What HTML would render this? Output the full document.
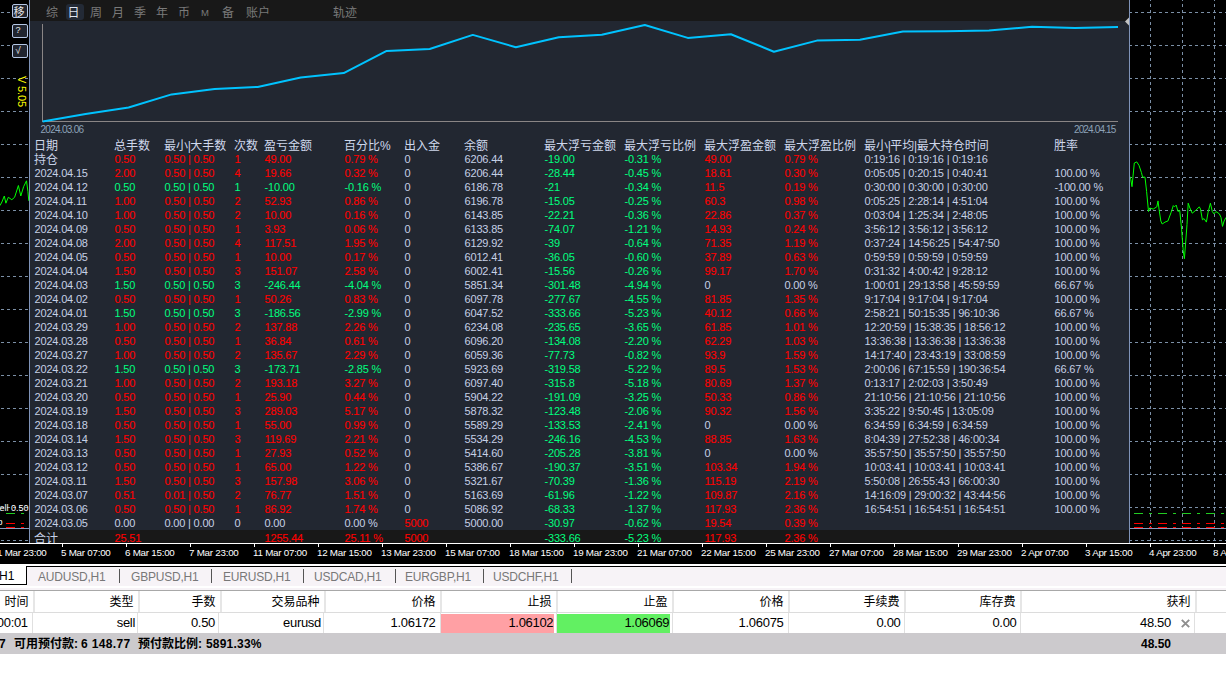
<!DOCTYPE html>
<html lang="zh"><head><meta charset="utf-8"><title>MT4</title>
<style>
html,body{margin:0;padding:0}
body{width:1226px;height:677px;overflow:hidden;background:#fff;position:relative;font-family:"Liberation Sans","Noto Sans CJK SC",sans-serif}
#chart{position:absolute;left:0;top:0;width:1226px;height:564px;background:#000;overflow:hidden}
svg{position:absolute;left:0;top:0;overflow:visible}
#grid line{stroke:#7b8fa6;stroke-width:1;stroke-dasharray:3 3;shape-rendering:crispEdges}
#panel{position:absolute;left:29px;top:0;width:1099px;height:543px;background:#222731;border-left:1px solid #7f93b8;border-right:1px solid #7f93b8;overflow:hidden}
#tb{position:absolute;left:0;top:0;width:1099px;height:21px;background:#181818}
#tb span{position:absolute;top:6px;height:16px;line-height:15px;font-size:12px;color:#7a7a7a;white-space:nowrap}
#tb span.on{color:#dfe6f2;width:18px;text-align:center}
#tb i{position:absolute;left:36px;top:4px;width:18px;height:16px;background:#232a36;border-radius:3px}
.rw{position:absolute;left:0;width:1099px;height:14px;line-height:14px;font-size:11px;white-space:nowrap}
.rw.tot{background:#181818;top:530px !important}
.rw.tot .c{top:1px}
.rw.tot .c.z{top:2px}
.c{position:absolute;top:-1px;letter-spacing:-0.18px}
.h,.z{font-size:12px;top:0;letter-spacing:0}
.h{color:#cfd8ec}
.h b{font-weight:normal;margin:0 -0.4px}
.w{color:#c6d0e6}
.c.r{color:#ff0000;-webkit-text-stroke:0.1px #ff0000}
.c.g{color:#00ff7f}
.dl{position:absolute;font-size:10px;color:#8da2b8;line-height:10px;top:124.5px;letter-spacing:-0.72px;white-space:nowrap}
.btn{position:absolute;left:12px;width:14px;height:12px;border:1px solid #b4c6e4;border-radius:2px;background:#20242e;color:#e6e6e6;font-size:11px;line-height:12px;text-align:center;overflow:hidden}
#ver{position:absolute;left:16px;top:76px;letter-spacing:-0.15px;width:12px;height:34px;color:#ffff00;font-size:11px;line-height:12px;white-space:nowrap;writing-mode:vertical-rl}
#axis{position:absolute;left:0;top:543px;width:1226px;height:21px;background:#000;border-top:1px solid #fff;overflow:hidden}
.tk{position:absolute;top:0;width:1px;height:3px;background:#fff}
.tl{position:absolute;top:2.6px;margin-left:1px;font-size:9.8px;line-height:12px;color:#fff;white-space:nowrap;letter-spacing:-0.25px}
#tabs{position:absolute;left:0;top:564px;width:1226px;height:26px;background:#fff}
#tabs .bar{position:absolute;left:27px;top:2px;width:1199px;height:19px;border-top:1px solid #000;background:#f7f3f7}
#tabs .bar2{position:absolute;left:0;top:24px;width:1226px;height:2px;background:#f7f3f7}
#tabs .act{position:absolute;left:0;top:0;width:27px;height:20px;background:#fff;border-bottom:1px solid #000;font-size:12px;line-height:24px;color:#000}
#tabs .act:after{content:'';position:absolute;right:0;top:2px;width:1px;height:19px;background:#000}
#tabs .t{position:absolute;top:5px;font-size:12px;line-height:16px;color:#787878;white-space:nowrap;letter-spacing:-0.2px}
#tabs .s{position:absolute;top:5px;width:1px;height:14px;background:#555}
#tbl{position:absolute;left:0;top:590px;width:1226px;height:43px;background:#fff;border-top:1px solid #a8a8a8}
#tbl .hr{position:absolute;left:0;top:0;width:1226px;height:21px;border-bottom:1px solid #dcdcdc}
#tbl .cell{position:absolute;box-sizing:border-box;height:21px;line-height:21px;font-size:12px;color:#000;text-align:right;padding-right:4.5px;padding-top:1px;border-right:2px solid #e6e6e6;white-space:nowrap}
#tbl .row .cell{top:22px;height:21px;line-height:20px;font-size:13px;border-right:1px solid #e0e0e0;padding-right:2px;padding-top:0;letter-spacing:-0.3px}
#stat{position:absolute;left:0;top:633px;width:1226px;height:21px;background:#cccacd;font-weight:bold;font-size:12px;line-height:22px;color:#000;white-space:nowrap}
#stat span{position:absolute;top:0}
</style></head><body>
<div id="chart">
<svg id="grid" width="1226" height="564">
<line x1="-5" y1="12.5" x2="11" y2="12.5"/>
<line x1="1129" y1="12.5" x2="1226" y2="12.5"/>
<line x1="-5" y1="45.5" x2="11" y2="45.5"/>
<line x1="1129" y1="45.5" x2="1226" y2="45.5"/>
<line x1="-5" y1="78.5" x2="29" y2="78.5"/>
<line x1="1129" y1="78.5" x2="1226" y2="78.5"/>
<line x1="-5" y1="111.5" x2="29" y2="111.5"/>
<line x1="1129" y1="111.5" x2="1226" y2="111.5"/>
<line x1="-5" y1="144.5" x2="29" y2="144.5"/>
<line x1="1129" y1="144.5" x2="1226" y2="144.5"/>
<line x1="-5" y1="177.5" x2="29" y2="177.5"/>
<line x1="1129" y1="177.5" x2="1226" y2="177.5"/>
<line x1="-5" y1="210.5" x2="29" y2="210.5"/>
<line x1="1129" y1="210.5" x2="1226" y2="210.5"/>
<line x1="-5" y1="243.5" x2="29" y2="243.5"/>
<line x1="1129" y1="243.5" x2="1226" y2="243.5"/>
<line x1="-5" y1="276.5" x2="29" y2="276.5"/>
<line x1="1129" y1="276.5" x2="1226" y2="276.5"/>
<line x1="-5" y1="309.5" x2="29" y2="309.5"/>
<line x1="1129" y1="309.5" x2="1226" y2="309.5"/>
<line x1="-5" y1="342.5" x2="29" y2="342.5"/>
<line x1="1129" y1="342.5" x2="1226" y2="342.5"/>
<line x1="-5" y1="375.5" x2="29" y2="375.5"/>
<line x1="1129" y1="375.5" x2="1226" y2="375.5"/>
<line x1="-5" y1="408.5" x2="29" y2="408.5"/>
<line x1="1129" y1="408.5" x2="1226" y2="408.5"/>
<line x1="-5" y1="441.5" x2="29" y2="441.5"/>
<line x1="1129" y1="441.5" x2="1226" y2="441.5"/>
<line x1="-5" y1="474.5" x2="29" y2="474.5"/>
<line x1="1129" y1="474.5" x2="1226" y2="474.5"/>
<line x1="-5" y1="507.5" x2="29" y2="507.5"/>
<line x1="1129" y1="507.5" x2="1226" y2="507.5"/>
<line x1="-5" y1="540.5" x2="29" y2="540.5"/>
<line x1="1129" y1="540.5" x2="1226" y2="540.5"/>
<line class="v" x1="1150.5" y1="-2" x2="1150.5" y2="543"/>
<line class="v" x1="1182.5" y1="-2" x2="1182.5" y2="543"/>
<line class="v" x1="1214.5" y1="-2" x2="1214.5" y2="543"/>
</svg>
<svg width="1226" height="564">
<polyline points="0.0,205.6 1.9,202.0 4.3,196.0 5.9,203.2 8.3,197.3 11.8,199.7 14.6,197.3 18.4,185.5 20.8,196.0 23.6,186.7 26.5,180.8 27.9,191.4 28.8,200.9" fill="none" stroke="#00ff00" stroke-width="1"/>
<polyline points="1129.6,176.0 1130.8,179.6 1132.0,186.7 1134.3,163.0 1136.7,161.9 1139.0,165.4 1141.4,172.5 1142.6,177.2 1145.0,177.2 1146.6,191.4 1148.5,211.5 1149.7,208.0 1153.2,209.1 1156.8,206.8 1158.0,200.9 1159.2,210.3 1160.8,221.0 1162.2,224.0 1165.0,222.1 1167.9,221.0 1171.0,212.7 1173.3,205.6 1174.5,206.8 1176.2,205.1 1178.0,211.5 1179.7,210.3 1181.6,229.2 1183.2,250.5 1184.4,258.7 1185.6,243.4 1187.0,224.5 1188.2,203.2 1189.9,208.0 1192.2,213.2 1195.8,210.3 1199.3,206.8 1200.5,209.1 1202.4,219.8 1204.0,218.6 1206.4,222.1 1208.0,212.7 1210.4,203.2 1212.3,211.5 1214.0,213.9 1215.9,211.5 1219.4,213.9 1221.0,217.4 1222.5,226.4 1224.1,221.0 1226.0,217.4" fill="none" stroke="#00ff00" stroke-width="1"/>
<g shape-rendering="crispEdges" stroke-width="1">
<line x1="-18" y1="513.5" x2="29" y2="513.5" stroke="#22cc22" stroke-dasharray="9 6 3 6"/>
<line x1="1134" y1="513.5" x2="1226" y2="513.5" stroke="#22cc22" stroke-dasharray="9 6 3 6"/>
<line x1="-18" y1="523.5" x2="29" y2="523.5" stroke="#ff0000" stroke-dasharray="9 6 3 6"/>
<line x1="1134" y1="523.5" x2="1226" y2="523.5" stroke="#ff0000" stroke-dasharray="9 6 3 6"/>
<line x1="-18" y1="527.5" x2="29" y2="527.5" stroke="#ff0000" stroke-dasharray="9 6 3 6"/>
<line x1="1134" y1="527.5" x2="1226" y2="527.5" stroke="#ff0000" stroke-dasharray="9 6 3 6"/>
<line x1="0" y1="528.5" x2="1226" y2="528.5" stroke="#8799bd"/>
</g>
<text x="28.5" y="511" text-anchor="end" font-size="9" fill="#ffffff" font-family="Liberation Sans, sans-serif">sell 0.50</text>
<text x="2.5" y="525" text-anchor="end" font-size="9" fill="#ffffff" font-family="Liberation Sans, sans-serif">stop</text>
</svg>
<div class="btn" style="top:4px"><span style="position:relative;left:-1px;top:1px">移</span></div>
<div class="btn" style="top:24px"><span style="position:relative;left:-2px;top:-2px;font-size:9px">?</span></div>
<div class="btn" style="top:44px"><span style="position:relative;left:-2px;top:-1px;font-size:10px">√</span></div>
<div id="ver">V 5.05</div>
<div id="panel">
<div id="tb">
<i></i><span style="left:16px">综</span><span class="on" style="left:34.5px">日</span><span style="left:60px">周</span><span style="left:82px">月</span><span style="left:104px">季</span><span style="left:126px">年</span><span style="left:148px">币</span><span style="left:171px;font-size:9.5px;top:4.6px">M</span><span style="left:192px">备</span><span style="left:216px">账户</span><span style="left:303px">轨迹</span>
</div>
<svg width="1099" height="140">
<line x1="12.5" y1="24" x2="12.5" y2="122" stroke="#8a8585" stroke-width="1" shape-rendering="crispEdges"/>
<line x1="12" y1="121.5" x2="1088" y2="121.5" stroke="#8a8585" stroke-width="1" shape-rendering="crispEdges"/>
<polyline points="12.6,121.5 55.6,114.0 98.6,107.5 141.6,94.4 184.7,89.1 227.7,86.9 270.7,77.4 313.7,73.1 356.7,50.9 399.7,49.0 442.8,34.9 485.8,47.2 528.8,37.3 571.8,34.7 614.8,25.0 657.8,37.9 700.9,34.3 743.9,51.7 786.9,40.6 829.9,39.8 872.9,31.5 915.9,31.2 959.0,30.5 1002.0,26.8 1045.0,28.0 1088.0,26.9" fill="none" stroke="#00c3ff" stroke-width="2" stroke-linejoin="round"/>
</svg>
<span class="dl" style="left:10.5px">2024.03.06</span>
<span class="dl" style="right:13.5px;letter-spacing:-0.85px">2024.04.15</span>
<svg width="1099" height="40"><polygon points="1095,21.5 1099,17.5 1099,25.5" fill="#c4c4c4"/></svg>
<div class="rw hd" style="top:139px"><span class="c h" style="left:4px">日期</span><span class="c h" style="left:84px">总手数</span><span class="c h" style="left:134px">最小<b>|</b>大手数</span><span class="c h" style="left:204px">次数</span><span class="c h" style="left:234px">盈亏金额</span><span class="c h" style="left:314px">百分比%</span><span class="c h" style="left:374px">出入金</span><span class="c h" style="left:434px">余额</span><span class="c h" style="left:514px">最大浮亏金额</span><span class="c h" style="left:594px">最大浮亏比例</span><span class="c h" style="left:674px">最大浮盈金额</span><span class="c h" style="left:754px">最大浮盈比例</span><span class="c h" style="left:834px">最小<b>|</b>平均<b>|</b>最大持仓时间</span><span class="c h" style="left:1024px">胜率</span></div>
<div class="rw" style="top:153px"><span class="c w z" style="left:4px">持仓</span><span class="c r" style="left:84.5px">0.50</span><span class="c r" style="left:134.5px">0.50 | 0.50</span><span class="c r" style="left:204.5px">1</span><span class="c r" style="left:234.5px">49.00</span><span class="c r" style="left:314.5px">0.79 %</span><span class="c w" style="left:374.5px">0</span><span class="c w" style="left:434.5px">6206.44</span><span class="c g" style="left:514.5px">-19.00</span><span class="c g" style="left:594.5px">-0.31 %</span><span class="c r" style="left:674.5px">49.00</span><span class="c r" style="left:754.5px">0.79 %</span><span class="c w" style="left:834.5px">0:19:16 | 0:19:16 | 0:19:16</span></div>
<div class="rw" style="top:167px"><span class="c w" style="left:4.5px">2024.04.15</span><span class="c r" style="left:84.5px">2.00</span><span class="c r" style="left:134.5px">0.50 | 0.50</span><span class="c r" style="left:204.5px">4</span><span class="c r" style="left:234.5px">19.66</span><span class="c r" style="left:314.5px">0.32 %</span><span class="c w" style="left:374.5px">0</span><span class="c w" style="left:434.5px">6206.44</span><span class="c g" style="left:514.5px">-28.44</span><span class="c g" style="left:594.5px">-0.45 %</span><span class="c r" style="left:674.5px">18.61</span><span class="c r" style="left:754.5px">0.30 %</span><span class="c w" style="left:834.5px">0:05:05 | 0:20:15 | 0:40:41</span><span class="c w" style="left:1024.5px">100.00 %</span></div>
<div class="rw" style="top:181px"><span class="c w" style="left:4.5px">2024.04.12</span><span class="c g" style="left:84.5px">0.50</span><span class="c g" style="left:134.5px">0.50 | 0.50</span><span class="c g" style="left:204.5px">1</span><span class="c g" style="left:234.5px">-10.00</span><span class="c g" style="left:314.5px">-0.16 %</span><span class="c w" style="left:374.5px">0</span><span class="c w" style="left:434.5px">6186.78</span><span class="c g" style="left:514.5px">-21</span><span class="c g" style="left:594.5px">-0.34 %</span><span class="c r" style="left:674.5px">11.5</span><span class="c r" style="left:754.5px">0.19 %</span><span class="c w" style="left:834.5px">0:30:00 | 0:30:00 | 0:30:00</span><span class="c w" style="left:1024.5px">-100.00 %</span></div>
<div class="rw" style="top:195px"><span class="c w" style="left:4.5px">2024.04.11</span><span class="c r" style="left:84.5px">1.00</span><span class="c r" style="left:134.5px">0.50 | 0.50</span><span class="c r" style="left:204.5px">2</span><span class="c r" style="left:234.5px">52.93</span><span class="c r" style="left:314.5px">0.86 %</span><span class="c w" style="left:374.5px">0</span><span class="c w" style="left:434.5px">6196.78</span><span class="c g" style="left:514.5px">-15.05</span><span class="c g" style="left:594.5px">-0.25 %</span><span class="c r" style="left:674.5px">60.3</span><span class="c r" style="left:754.5px">0.98 %</span><span class="c w" style="left:834.5px">0:05:25 | 2:28:14 | 4:51:04</span><span class="c w" style="left:1024.5px">100.00 %</span></div>
<div class="rw" style="top:209px"><span class="c w" style="left:4.5px">2024.04.10</span><span class="c r" style="left:84.5px">1.00</span><span class="c r" style="left:134.5px">0.50 | 0.50</span><span class="c r" style="left:204.5px">2</span><span class="c r" style="left:234.5px">10.00</span><span class="c r" style="left:314.5px">0.16 %</span><span class="c w" style="left:374.5px">0</span><span class="c w" style="left:434.5px">6143.85</span><span class="c g" style="left:514.5px">-22.21</span><span class="c g" style="left:594.5px">-0.36 %</span><span class="c r" style="left:674.5px">22.86</span><span class="c r" style="left:754.5px">0.37 %</span><span class="c w" style="left:834.5px">0:03:04 | 1:25:34 | 2:48:05</span><span class="c w" style="left:1024.5px">100.00 %</span></div>
<div class="rw" style="top:223px"><span class="c w" style="left:4.5px">2024.04.09</span><span class="c r" style="left:84.5px">0.50</span><span class="c r" style="left:134.5px">0.50 | 0.50</span><span class="c r" style="left:204.5px">1</span><span class="c r" style="left:234.5px">3.93</span><span class="c r" style="left:314.5px">0.06 %</span><span class="c w" style="left:374.5px">0</span><span class="c w" style="left:434.5px">6133.85</span><span class="c g" style="left:514.5px">-74.07</span><span class="c g" style="left:594.5px">-1.21 %</span><span class="c r" style="left:674.5px">14.93</span><span class="c r" style="left:754.5px">0.24 %</span><span class="c w" style="left:834.5px">3:56:12 | 3:56:12 | 3:56:12</span><span class="c w" style="left:1024.5px">100.00 %</span></div>
<div class="rw" style="top:237px"><span class="c w" style="left:4.5px">2024.04.08</span><span class="c r" style="left:84.5px">2.00</span><span class="c r" style="left:134.5px">0.50 | 0.50</span><span class="c r" style="left:204.5px">4</span><span class="c r" style="left:234.5px">117.51</span><span class="c r" style="left:314.5px">1.95 %</span><span class="c w" style="left:374.5px">0</span><span class="c w" style="left:434.5px">6129.92</span><span class="c g" style="left:514.5px">-39</span><span class="c g" style="left:594.5px">-0.64 %</span><span class="c r" style="left:674.5px">71.35</span><span class="c r" style="left:754.5px">1.19 %</span><span class="c w" style="left:834.5px">0:37:24 | 14:56:25 | 54:47:50</span><span class="c w" style="left:1024.5px">100.00 %</span></div>
<div class="rw" style="top:251px"><span class="c w" style="left:4.5px">2024.04.05</span><span class="c r" style="left:84.5px">0.50</span><span class="c r" style="left:134.5px">0.50 | 0.50</span><span class="c r" style="left:204.5px">1</span><span class="c r" style="left:234.5px">10.00</span><span class="c r" style="left:314.5px">0.17 %</span><span class="c w" style="left:374.5px">0</span><span class="c w" style="left:434.5px">6012.41</span><span class="c g" style="left:514.5px">-36.05</span><span class="c g" style="left:594.5px">-0.60 %</span><span class="c r" style="left:674.5px">37.89</span><span class="c r" style="left:754.5px">0.63 %</span><span class="c w" style="left:834.5px">0:59:59 | 0:59:59 | 0:59:59</span><span class="c w" style="left:1024.5px">100.00 %</span></div>
<div class="rw" style="top:265px"><span class="c w" style="left:4.5px">2024.04.04</span><span class="c r" style="left:84.5px">1.50</span><span class="c r" style="left:134.5px">0.50 | 0.50</span><span class="c r" style="left:204.5px">3</span><span class="c r" style="left:234.5px">151.07</span><span class="c r" style="left:314.5px">2.58 %</span><span class="c w" style="left:374.5px">0</span><span class="c w" style="left:434.5px">6002.41</span><span class="c g" style="left:514.5px">-15.56</span><span class="c g" style="left:594.5px">-0.26 %</span><span class="c r" style="left:674.5px">99.17</span><span class="c r" style="left:754.5px">1.70 %</span><span class="c w" style="left:834.5px">0:31:32 | 4:00:42 | 9:28:12</span><span class="c w" style="left:1024.5px">100.00 %</span></div>
<div class="rw" style="top:279px"><span class="c w" style="left:4.5px">2024.04.03</span><span class="c g" style="left:84.5px">1.50</span><span class="c g" style="left:134.5px">0.50 | 0.50</span><span class="c g" style="left:204.5px">3</span><span class="c g" style="left:234.5px">-246.44</span><span class="c g" style="left:314.5px">-4.04 %</span><span class="c w" style="left:374.5px">0</span><span class="c w" style="left:434.5px">5851.34</span><span class="c g" style="left:514.5px">-301.48</span><span class="c g" style="left:594.5px">-4.94 %</span><span class="c w" style="left:674.5px">0</span><span class="c w" style="left:754.5px">0.00 %</span><span class="c w" style="left:834.5px">1:00:01 | 29:13:58 | 45:59:59</span><span class="c w" style="left:1024.5px">66.67 %</span></div>
<div class="rw" style="top:293px"><span class="c w" style="left:4.5px">2024.04.02</span><span class="c r" style="left:84.5px">0.50</span><span class="c r" style="left:134.5px">0.50 | 0.50</span><span class="c r" style="left:204.5px">1</span><span class="c r" style="left:234.5px">50.26</span><span class="c r" style="left:314.5px">0.83 %</span><span class="c w" style="left:374.5px">0</span><span class="c w" style="left:434.5px">6097.78</span><span class="c g" style="left:514.5px">-277.67</span><span class="c g" style="left:594.5px">-4.55 %</span><span class="c r" style="left:674.5px">81.85</span><span class="c r" style="left:754.5px">1.35 %</span><span class="c w" style="left:834.5px">9:17:04 | 9:17:04 | 9:17:04</span><span class="c w" style="left:1024.5px">100.00 %</span></div>
<div class="rw" style="top:307px"><span class="c w" style="left:4.5px">2024.04.01</span><span class="c g" style="left:84.5px">1.50</span><span class="c g" style="left:134.5px">0.50 | 0.50</span><span class="c g" style="left:204.5px">3</span><span class="c g" style="left:234.5px">-186.56</span><span class="c g" style="left:314.5px">-2.99 %</span><span class="c w" style="left:374.5px">0</span><span class="c w" style="left:434.5px">6047.52</span><span class="c g" style="left:514.5px">-333.66</span><span class="c g" style="left:594.5px">-5.23 %</span><span class="c r" style="left:674.5px">40.12</span><span class="c r" style="left:754.5px">0.66 %</span><span class="c w" style="left:834.5px">2:58:21 | 50:15:35 | 96:10:36</span><span class="c w" style="left:1024.5px">66.67 %</span></div>
<div class="rw" style="top:321px"><span class="c w" style="left:4.5px">2024.03.29</span><span class="c r" style="left:84.5px">1.00</span><span class="c r" style="left:134.5px">0.50 | 0.50</span><span class="c r" style="left:204.5px">2</span><span class="c r" style="left:234.5px">137.88</span><span class="c r" style="left:314.5px">2.26 %</span><span class="c w" style="left:374.5px">0</span><span class="c w" style="left:434.5px">6234.08</span><span class="c g" style="left:514.5px">-235.65</span><span class="c g" style="left:594.5px">-3.65 %</span><span class="c r" style="left:674.5px">61.85</span><span class="c r" style="left:754.5px">1.01 %</span><span class="c w" style="left:834.5px">12:20:59 | 15:38:35 | 18:56:12</span><span class="c w" style="left:1024.5px">100.00 %</span></div>
<div class="rw" style="top:335px"><span class="c w" style="left:4.5px">2024.03.28</span><span class="c r" style="left:84.5px">0.50</span><span class="c r" style="left:134.5px">0.50 | 0.50</span><span class="c r" style="left:204.5px">1</span><span class="c r" style="left:234.5px">36.84</span><span class="c r" style="left:314.5px">0.61 %</span><span class="c w" style="left:374.5px">0</span><span class="c w" style="left:434.5px">6096.20</span><span class="c g" style="left:514.5px">-134.08</span><span class="c g" style="left:594.5px">-2.20 %</span><span class="c r" style="left:674.5px">62.29</span><span class="c r" style="left:754.5px">1.03 %</span><span class="c w" style="left:834.5px">13:36:38 | 13:36:38 | 13:36:38</span><span class="c w" style="left:1024.5px">100.00 %</span></div>
<div class="rw" style="top:349px"><span class="c w" style="left:4.5px">2024.03.27</span><span class="c r" style="left:84.5px">1.00</span><span class="c r" style="left:134.5px">0.50 | 0.50</span><span class="c r" style="left:204.5px">2</span><span class="c r" style="left:234.5px">135.67</span><span class="c r" style="left:314.5px">2.29 %</span><span class="c w" style="left:374.5px">0</span><span class="c w" style="left:434.5px">6059.36</span><span class="c g" style="left:514.5px">-77.73</span><span class="c g" style="left:594.5px">-0.82 %</span><span class="c r" style="left:674.5px">93.9</span><span class="c r" style="left:754.5px">1.59 %</span><span class="c w" style="left:834.5px">14:17:40 | 23:43:19 | 33:08:59</span><span class="c w" style="left:1024.5px">100.00 %</span></div>
<div class="rw" style="top:363px"><span class="c w" style="left:4.5px">2024.03.22</span><span class="c g" style="left:84.5px">1.50</span><span class="c g" style="left:134.5px">0.50 | 0.50</span><span class="c g" style="left:204.5px">3</span><span class="c g" style="left:234.5px">-173.71</span><span class="c g" style="left:314.5px">-2.85 %</span><span class="c w" style="left:374.5px">0</span><span class="c w" style="left:434.5px">5923.69</span><span class="c g" style="left:514.5px">-319.58</span><span class="c g" style="left:594.5px">-5.22 %</span><span class="c r" style="left:674.5px">89.5</span><span class="c r" style="left:754.5px">1.53 %</span><span class="c w" style="left:834.5px">2:00:06 | 67:15:59 | 190:36:54</span><span class="c w" style="left:1024.5px">66.67 %</span></div>
<div class="rw" style="top:377px"><span class="c w" style="left:4.5px">2024.03.21</span><span class="c r" style="left:84.5px">1.00</span><span class="c r" style="left:134.5px">0.50 | 0.50</span><span class="c r" style="left:204.5px">2</span><span class="c r" style="left:234.5px">193.18</span><span class="c r" style="left:314.5px">3.27 %</span><span class="c w" style="left:374.5px">0</span><span class="c w" style="left:434.5px">6097.40</span><span class="c g" style="left:514.5px">-315.8</span><span class="c g" style="left:594.5px">-5.18 %</span><span class="c r" style="left:674.5px">80.69</span><span class="c r" style="left:754.5px">1.37 %</span><span class="c w" style="left:834.5px">0:13:17 | 2:02:03 | 3:50:49</span><span class="c w" style="left:1024.5px">100.00 %</span></div>
<div class="rw" style="top:391px"><span class="c w" style="left:4.5px">2024.03.20</span><span class="c r" style="left:84.5px">0.50</span><span class="c r" style="left:134.5px">0.50 | 0.50</span><span class="c r" style="left:204.5px">1</span><span class="c r" style="left:234.5px">25.90</span><span class="c r" style="left:314.5px">0.44 %</span><span class="c w" style="left:374.5px">0</span><span class="c w" style="left:434.5px">5904.22</span><span class="c g" style="left:514.5px">-191.09</span><span class="c g" style="left:594.5px">-3.25 %</span><span class="c r" style="left:674.5px">50.33</span><span class="c r" style="left:754.5px">0.86 %</span><span class="c w" style="left:834.5px">21:10:56 | 21:10:56 | 21:10:56</span><span class="c w" style="left:1024.5px">100.00 %</span></div>
<div class="rw" style="top:405px"><span class="c w" style="left:4.5px">2024.03.19</span><span class="c r" style="left:84.5px">1.50</span><span class="c r" style="left:134.5px">0.50 | 0.50</span><span class="c r" style="left:204.5px">3</span><span class="c r" style="left:234.5px">289.03</span><span class="c r" style="left:314.5px">5.17 %</span><span class="c w" style="left:374.5px">0</span><span class="c w" style="left:434.5px">5878.32</span><span class="c g" style="left:514.5px">-123.48</span><span class="c g" style="left:594.5px">-2.06 %</span><span class="c r" style="left:674.5px">90.32</span><span class="c r" style="left:754.5px">1.56 %</span><span class="c w" style="left:834.5px">3:35:22 | 9:50:45 | 13:05:09</span><span class="c w" style="left:1024.5px">100.00 %</span></div>
<div class="rw" style="top:419px"><span class="c w" style="left:4.5px">2024.03.18</span><span class="c r" style="left:84.5px">0.50</span><span class="c r" style="left:134.5px">0.50 | 0.50</span><span class="c r" style="left:204.5px">1</span><span class="c r" style="left:234.5px">55.00</span><span class="c r" style="left:314.5px">0.99 %</span><span class="c w" style="left:374.5px">0</span><span class="c w" style="left:434.5px">5589.29</span><span class="c g" style="left:514.5px">-133.53</span><span class="c g" style="left:594.5px">-2.41 %</span><span class="c w" style="left:674.5px">0</span><span class="c w" style="left:754.5px">0.00 %</span><span class="c w" style="left:834.5px">6:34:59 | 6:34:59 | 6:34:59</span><span class="c w" style="left:1024.5px">100.00 %</span></div>
<div class="rw" style="top:433px"><span class="c w" style="left:4.5px">2024.03.14</span><span class="c r" style="left:84.5px">1.50</span><span class="c r" style="left:134.5px">0.50 | 0.50</span><span class="c r" style="left:204.5px">3</span><span class="c r" style="left:234.5px">119.69</span><span class="c r" style="left:314.5px">2.21 %</span><span class="c w" style="left:374.5px">0</span><span class="c w" style="left:434.5px">5534.29</span><span class="c g" style="left:514.5px">-246.16</span><span class="c g" style="left:594.5px">-4.53 %</span><span class="c r" style="left:674.5px">88.85</span><span class="c r" style="left:754.5px">1.63 %</span><span class="c w" style="left:834.5px">8:04:39 | 27:52:38 | 46:00:34</span><span class="c w" style="left:1024.5px">100.00 %</span></div>
<div class="rw" style="top:447px"><span class="c w" style="left:4.5px">2024.03.13</span><span class="c r" style="left:84.5px">0.50</span><span class="c r" style="left:134.5px">0.50 | 0.50</span><span class="c r" style="left:204.5px">1</span><span class="c r" style="left:234.5px">27.93</span><span class="c r" style="left:314.5px">0.52 %</span><span class="c w" style="left:374.5px">0</span><span class="c w" style="left:434.5px">5414.60</span><span class="c g" style="left:514.5px">-205.28</span><span class="c g" style="left:594.5px">-3.81 %</span><span class="c w" style="left:674.5px">0</span><span class="c w" style="left:754.5px">0.00 %</span><span class="c w" style="left:834.5px">35:57:50 | 35:57:50 | 35:57:50</span><span class="c w" style="left:1024.5px">100.00 %</span></div>
<div class="rw" style="top:461px"><span class="c w" style="left:4.5px">2024.03.12</span><span class="c r" style="left:84.5px">0.50</span><span class="c r" style="left:134.5px">0.50 | 0.50</span><span class="c r" style="left:204.5px">1</span><span class="c r" style="left:234.5px">65.00</span><span class="c r" style="left:314.5px">1.22 %</span><span class="c w" style="left:374.5px">0</span><span class="c w" style="left:434.5px">5386.67</span><span class="c g" style="left:514.5px">-190.37</span><span class="c g" style="left:594.5px">-3.51 %</span><span class="c r" style="left:674.5px">103.34</span><span class="c r" style="left:754.5px">1.94 %</span><span class="c w" style="left:834.5px">10:03:41 | 10:03:41 | 10:03:41</span><span class="c w" style="left:1024.5px">100.00 %</span></div>
<div class="rw" style="top:475px"><span class="c w" style="left:4.5px">2024.03.11</span><span class="c r" style="left:84.5px">1.50</span><span class="c r" style="left:134.5px">0.50 | 0.50</span><span class="c r" style="left:204.5px">3</span><span class="c r" style="left:234.5px">157.98</span><span class="c r" style="left:314.5px">3.06 %</span><span class="c w" style="left:374.5px">0</span><span class="c w" style="left:434.5px">5321.67</span><span class="c g" style="left:514.5px">-70.39</span><span class="c g" style="left:594.5px">-1.36 %</span><span class="c r" style="left:674.5px">115.19</span><span class="c r" style="left:754.5px">2.19 %</span><span class="c w" style="left:834.5px">5:50:08 | 26:55:43 | 66:00:30</span><span class="c w" style="left:1024.5px">100.00 %</span></div>
<div class="rw" style="top:489px"><span class="c w" style="left:4.5px">2024.03.07</span><span class="c r" style="left:84.5px">0.51</span><span class="c r" style="left:134.5px">0.01 | 0.50</span><span class="c r" style="left:204.5px">2</span><span class="c r" style="left:234.5px">76.77</span><span class="c r" style="left:314.5px">1.51 %</span><span class="c w" style="left:374.5px">0</span><span class="c w" style="left:434.5px">5163.69</span><span class="c g" style="left:514.5px">-61.96</span><span class="c g" style="left:594.5px">-1.22 %</span><span class="c r" style="left:674.5px">109.87</span><span class="c r" style="left:754.5px">2.16 %</span><span class="c w" style="left:834.5px">14:16:09 | 29:00:32 | 43:44:56</span><span class="c w" style="left:1024.5px">100.00 %</span></div>
<div class="rw" style="top:503px"><span class="c w" style="left:4.5px">2024.03.06</span><span class="c r" style="left:84.5px">0.50</span><span class="c r" style="left:134.5px">0.50 | 0.50</span><span class="c r" style="left:204.5px">1</span><span class="c r" style="left:234.5px">86.92</span><span class="c r" style="left:314.5px">1.74 %</span><span class="c w" style="left:374.5px">0</span><span class="c w" style="left:434.5px">5086.92</span><span class="c g" style="left:514.5px">-68.33</span><span class="c g" style="left:594.5px">-1.37 %</span><span class="c r" style="left:674.5px">117.93</span><span class="c r" style="left:754.5px">2.36 %</span><span class="c w" style="left:834.5px">16:54:51 | 16:54:51 | 16:54:51</span><span class="c w" style="left:1024.5px">100.00 %</span></div>
<div class="rw" style="top:517px"><span class="c w" style="left:4.5px">2024.03.05</span><span class="c w" style="left:84.5px">0.00</span><span class="c w" style="left:134.5px">0.00 | 0.00</span><span class="c w" style="left:204.5px">0</span><span class="c w" style="left:234.5px">0.00</span><span class="c w" style="left:314.5px">0.00 %</span><span class="c r" style="left:374.5px">5000</span><span class="c w" style="left:434.5px">5000.00</span><span class="c g" style="left:514.5px">-30.97</span><span class="c g" style="left:594.5px">-0.62 %</span><span class="c r" style="left:674.5px">19.54</span><span class="c r" style="left:754.5px">0.39 %</span></div>
<div class="rw tot" style="top:531px"><span class="c w z" style="left:4px">合计</span><span class="c r" style="left:84.5px">25.51</span><span class="c r" style="left:234.5px">1255.44</span><span class="c r" style="left:314.5px">25.11 %</span><span class="c r" style="left:374.5px">5000</span><span class="c g" style="left:514.5px">-333.66</span><span class="c g" style="left:594.5px">-5.23 %</span><span class="c r" style="left:674.5px">117.93</span><span class="c r" style="left:754.5px">2.36 %</span></div>
</div>
<div id="axis"><i class="tk" style="left:-2px"></i><span class="tl" style="left:-4px">1 Mar 23:00</span><i class="tk" style="left:62px"></i><span class="tl" style="left:60px">5 Mar 07:00</span><i class="tk" style="left:126px"></i><span class="tl" style="left:124px">6 Mar 15:00</span><i class="tk" style="left:190px"></i><span class="tl" style="left:188px">7 Mar 23:00</span><i class="tk" style="left:254px"></i><span class="tl" style="left:252px">11 Mar 07:00</span><i class="tk" style="left:318px"></i><span class="tl" style="left:316px">12 Mar 15:00</span><i class="tk" style="left:382px"></i><span class="tl" style="left:380px">13 Mar 23:00</span><i class="tk" style="left:446px"></i><span class="tl" style="left:444px">15 Mar 07:00</span><i class="tk" style="left:510px"></i><span class="tl" style="left:508px">18 Mar 15:00</span><i class="tk" style="left:574px"></i><span class="tl" style="left:572px">19 Mar 23:00</span><i class="tk" style="left:638px"></i><span class="tl" style="left:636px">21 Mar 07:00</span><i class="tk" style="left:702px"></i><span class="tl" style="left:700px">22 Mar 15:00</span><i class="tk" style="left:766px"></i><span class="tl" style="left:764px">25 Mar 23:00</span><i class="tk" style="left:830px"></i><span class="tl" style="left:828px">27 Mar 07:00</span><i class="tk" style="left:894px"></i><span class="tl" style="left:892px">28 Mar 15:00</span><i class="tk" style="left:958px"></i><span class="tl" style="left:956px">29 Mar 23:00</span><i class="tk" style="left:1022px"></i><span class="tl" style="left:1020px">2 Apr 07:00</span><i class="tk" style="left:1086px"></i><span class="tl" style="left:1084px">3 Apr 15:00</span><i class="tk" style="left:1150px"></i><span class="tl" style="left:1148px">4 Apr 23:00</span><i class="tk" style="left:1214px"></i><span class="tl" style="left:1212px">8 Apr 07:00</span></div>
</div>
<div id="tabs">
<div class="bar"></div><div class="bar2"></div>
<div class="act"><span style="position:relative;left:-1px">H1</span></div>
<span class="t" style="left:38px">AUDUSD,H1</span><i class="s" style="left:119px"></i>
<span class="t" style="left:131px">GBPUSD,H1</span><i class="s" style="left:211px"></i>
<span class="t" style="left:223px">EURUSD,H1</span><i class="s" style="left:303px"></i>
<span class="t" style="left:314px">USDCAD,H1</span><i class="s" style="left:395px"></i>
<span class="t" style="left:405px">EURGBP,H1</span><i class="s" style="left:483px"></i>
<span class="t" style="left:493px">USDCHF,H1</span><i class="s" style="left:571px"></i>
</div>
<div id="tbl">
<div class="hr">
<div class="cell" style="left:0;width:35px">时间</div>
<div class="cell" style="left:35px;width:105px">类型</div>
<div class="cell" style="left:140px;width:82px">手数</div>
<div class="cell" style="left:222px;width:104px">交易品种</div>
<div class="cell" style="left:326px;width:116px">价格</div>
<div class="cell" style="left:442px;width:116px">止损</div>
<div class="cell" style="left:558px;width:116px">止盈</div>
<div class="cell" style="left:674px;width:116px">价格</div>
<div class="cell" style="left:790px;width:116px">手续费</div>
<div class="cell" style="left:906px;width:116px">库存费</div>
<div class="cell" style="left:1022px;width:175px">获利</div>
</div>
<div class="row">
<div class="cell" style="left:0;width:33px"><span style="position:absolute;right:4.2px;top:0">00:00:01</span></div>
<div class="cell" style="left:33px;width:105px">sell</div>
<div class="cell" style="left:138px;width:81px;padding-right:3px">0.50</div>
<div class="cell" style="left:219px;width:105px">eurusd</div>
<div class="cell" style="left:324px;width:117px;padding-right:4.5px">1.06172</div>
<div class="cell" style="left:441px;width:116px"><b style="position:absolute;left:0;top:1px;right:2px;bottom:1px;background:#ffa0a4"></b><span style="position:relative;left:-0.7px">1.06102</span></div>
<div class="cell" style="left:557px;width:116px"><b style="position:absolute;left:0;top:1px;right:2px;bottom:1px;background:#62f062"></b><span style="position:relative;left:-0.7px">1.06069</span></div>
<div class="cell" style="left:673px;width:116px;padding-right:4.5px">1.06075</div>
<div class="cell" style="left:789px;width:116px;padding-right:3.5px">0.00</div>
<div class="cell" style="left:905px;width:116px;padding-right:3.5px">0.00</div>
<div class="cell" style="left:1021px;width:174px;padding-right:23px;letter-spacing:-0.3px">48.50<svg style="left:160px;top:5.8px" width="9" height="9" viewBox="0 0 9 9"><path d="M0.8 0.8 L8.2 8.2 M8.2 0.8 L0.8 8.2" stroke="#8e8e8e" stroke-width="1.9" fill="none"/></svg></div>
</div>
</div>
<div id="stat"><span style="left:-1px">7</span><span style="left:14px">可用预付款:</span><span style="left:81px;letter-spacing:0.35px">6 148.77</span><span style="left:138px">预付款比例:</span><span style="left:206px;letter-spacing:0.2px">5891.33%</span><span style="right:55px">48.50</span></div>
</body></html>
